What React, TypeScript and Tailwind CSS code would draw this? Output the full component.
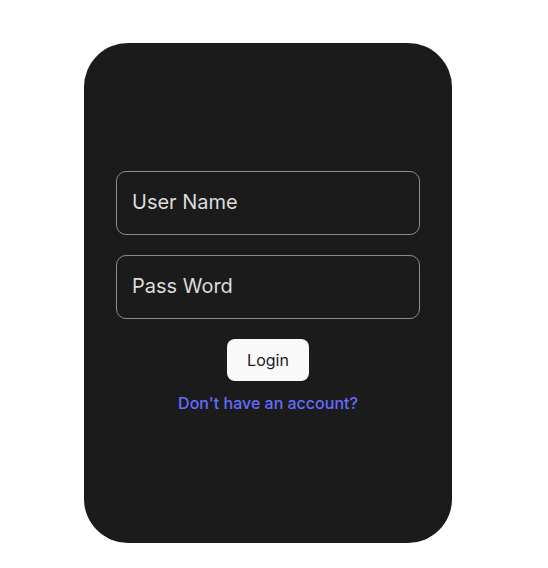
export default function App() {
  return (
    <div className="min-h-[568px] w-full bg-white pt-[43px] font-['Inter',sans-serif]">
      <div className="ml-[84px] flex h-[500px] w-[368px] flex-col items-center justify-center rounded-[44px] bg-[#1b1b1b] px-8">
        <input
          className="h-16 w-full rounded-[10px] border border-[#8e8e8e] bg-transparent px-[15px] pb-[2px] text-[20px] text-[#dcdcdc] placeholder:text-[#dcdcdc] outline-none"
          placeholder="User Name"
        />
        <input
          className="mt-5 h-16 w-full rounded-[10px] border border-[#8e8e8e] bg-transparent px-[15px] pb-[2px] text-[20px] text-[#dcdcdc] placeholder:text-[#dcdcdc] outline-none"
          placeholder="Pass Word"
        />
        <button className="mt-5 h-[42px] w-[82px] rounded-lg bg-[#f9f9f9] text-base font-normal text-[#1a1a1a]">
          Login
        </button>
        <a className="mt-[10px] text-base font-medium text-[#646cff]" href="#">
          Don't have an account?
        </a>
      </div>
    </div>
  );
}
